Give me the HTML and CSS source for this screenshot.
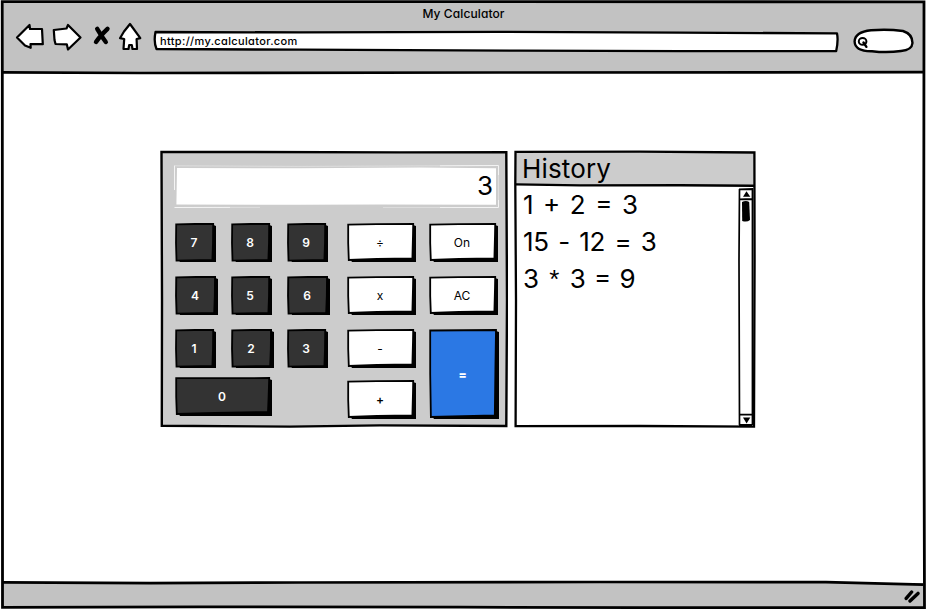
FILE: index.html
```html
<!DOCTYPE html>
<html lang="en">
<head>
<meta charset="utf-8">
<title>My Calculator</title>
<link rel="stylesheet" href="styles.css">
</head>
<body>
<svg class="defs" aria-hidden="true">
  <symbol id="key" viewBox="0 0 41 39" preserveAspectRatio="none">
    <path d="M4 4L38.5 2L41 3L41 39L5 39.2L4 37Z"/>
    <path d="M1.2 1.4L20 1L38.2 1L38 20L37.4 37L1.5 37.6L1 20Z" fill="#333" stroke="#000" stroke-width="1.8"/>
  </symbol>
  <symbol id="op" viewBox="0 0 69 39" preserveAspectRatio="none">
    <path d="M4 4L66 2L69 3L69 39L5 39.2L4 37Z"/>
    <path d="M1.2 1.6L30 1.2L66.2 1L66 12L65.4 35.4L30 36L1.8 37L1.2 20Z" fill="#fff" stroke="#000" stroke-width="1.8"/>
  </symbol>
  <symbol id="zero" viewBox="0 0 97 39" preserveAspectRatio="none">
    <path d="M4 4L94 2L97 3L97 39L5 39.2L4 37Z"/>
    <path d="M1.2 1.2L94.2 1L93.6 20L93 35L40 36L1.8 37L1.2 20Z" fill="#333" stroke="#000" stroke-width="1.8"/>
  </symbol>
  <symbol id="eq" viewBox="0 0 70 90" preserveAspectRatio="none">
    <path d="M4 4L67 2L70 3L70 90L5 90.2L4 88Z"/>
    <path d="M1.2 1.5L67 1L66.4 40L65.8 86.5L1.9 88L1.2 45Z" fill="#2b78e4" stroke="#000" stroke-width="1.8"/>
  </symbol>
</svg>
<div class="window">
  <header class="toolbar">
    <h1 class="title">My Calculator</h1>
    <div class="bar">
      <svg class="nav" width="132" height="30" viewBox="14 22 132 30">
        <g fill="#fff" stroke="#000" stroke-width="2.2" stroke-linejoin="round">
          <path d="M17 37.5L29.5 25L30 29L42 29L42.8 44.2L30.5 44L30.7 47.8L25 45.5Z"/>
          <path d="M53.8 30L66.5 28.5L68 25L80.5 37.5L68 49.5L66.8 44.3L55.5 44L54.5 40Z"/>
          <path d="M130 24L140.3 38.2L136.6 39L137 49L132.5 49L131.8 45L129.2 45L128.5 49L123.5 49L124.2 39L120 38.2L124 31.5Z"/>
        </g>
        <path d="M97.2 28.8Q102 37 105.8 42M107.5 28.8Q100 36 96 42" fill="none" stroke="#000" stroke-width="4.4" stroke-linecap="round"/>
      </svg>
      <div class="address">
        <svg class="sketch" viewBox="153 30 687 23">
          <path d="M155.5 32L300 32.4L500 31.8L680 32.6L837 33.4Q838.5 40 836.2 51L680 51.2L520 50.7L300 49.7L156.5 49Q153.5 42 155.5 32Z" fill="#fff" stroke="#000" stroke-width="2.3" stroke-linejoin="round"/>
        </svg>
        <span class="url">http://my.calculator.com</span>
      </div>
      <svg class="search" width="62" height="28" viewBox="852 27 62 28">
        <path d="M871 30.3Q887 28.8 903 31Q912.5 34 912.5 43Q912 50 901 51Q887 53 872 51.2Q855 51.5 854.6 41.5Q855 32 871 30.3Z" fill="#fff" stroke="#000" stroke-width="2.4"/>
        <ellipse cx="862.6" cy="41.4" rx="3.8" ry="3.4" fill="none" stroke="#000" stroke-width="2"/>
        <path d="M863.5 42.5L866.4 46.8" stroke="#000" stroke-width="2.4" stroke-linecap="round"/>
      </svg>
    </div>
  </header>
  <main class="page">
    <section class="calc">
      <svg class="sketch" viewBox="160 150 348 278">
        <path d="M161.5 152L225 152L400 152.4L506.3 152.2L507 300L506.3 426L380 425.4L290 426.6L161.8 425.8L162 300Z" fill="#ccc" stroke="#000" stroke-width="2.4"/>
      </svg>
      <div class="display">
        <svg class="sketch" viewBox="174 165 326 43">
          <path d="M177 168L300 168.3L420 167.6L496 168.3V204.7L380 204.5L300 204.8L176.4 204.6Z" fill="#fff"/>
          <path d="M174.5 165.5V190M174.5 207.5L230 207.4M440 207.6L498.5 207.5V200M440 165.8L498.5 165.5V175" fill="none" stroke="#f4f4f4"/>
          <path d="M175 165.8L300 166.4L440 165.8M230 207.4H260M383 207.6H440M498.5 175V200" fill="none" stroke="#dedede"/>
        </svg>
        <output class="readout">3</output>
      </div>
      <div class="pad">
        <div class="digits">
          <button class="key"><svg class="face"><use href="#key"/></svg><span>7</span></button>
          <button class="key"><svg class="face"><use href="#key"/></svg><span>8</span></button>
          <button class="key"><svg class="face"><use href="#key"/></svg><span>9</span></button>
          <button class="key broad"><svg class="face"><use href="#key"/></svg><span>4</span></button>
          <button class="key"><svg class="face"><use href="#key"/></svg><span>5</span></button>
          <button class="key broad"><svg class="face"><use href="#key"/></svg><span>6</span></button>
          <button class="key"><svg class="face"><use href="#key"/></svg><span>1</span></button>
          <button class="key broad"><svg class="face"><use href="#key"/></svg><span>2</span></button>
          <button class="key"><svg class="face"><use href="#key"/></svg><span>3</span></button>
          <button class="key zero"><svg class="face"><use href="#zero"/></svg><span>0</span></button>
        </div>
        <div class="ops">
          <button class="key op"><svg class="face"><use href="#op"/></svg><span>÷</span></button>
          <button class="key op"><svg class="face"><use href="#op"/></svg><span>x</span></button>
          <button class="key op"><svg class="face"><use href="#op"/></svg><span>-</span></button>
          <button class="key op plus"><svg class="face"><use href="#op"/></svg><span>+</span></button>
        </div>
        <div class="ops controls">
          <button class="key op"><svg class="face"><use href="#op"/></svg><span>On</span></button>
          <button class="key op"><svg class="face"><use href="#op"/></svg><span>AC</span></button>
          <button class="key equals"><svg class="face"><use href="#eq"/></svg><span>=</span></button>
        </div>
      </div>
    </section>
    <section class="history">
      <svg class="sketch" viewBox="514 150 242 278">
        <path d="M516 152H754V184.8L640 185.6L516 184.5Z" fill="#ccc"/>
        <path d="M515.5 151.8L640 151.6L754.4 152.5L754.6 260L754 426.6L640 426L515.6 426.2L516 300L515.3 184Z" fill="none" stroke="#000" stroke-width="2.3"/>
        <path d="M516 184.4L580 185.4L680 185.2L754 185.8" fill="none" stroke="#000" stroke-width="2.4"/>
      </svg>
      <h2 class="heading">History</h2>
      <div class="log">
        <ul class="entries">
          <li class="sum">1 + 2 = 3</li>
          <li class="difference">15 - 12 = 3</li>
          <li class="product">3 <span class="star">*</span> 3 = 9</li>
        </ul>
        <svg class="scroll" width="17" height="238" viewBox="738 188 17 238">
          <path d="M739.5 189L739 260L739.5 425" fill="none" stroke="#000" stroke-width="1.7"/>
          <path d="M739 189.4L752.5 189V425.3M739 199.3L752 199M739 414.6H752M739 425H752" fill="none" stroke="#000" stroke-width="1.8"/>
          <path d="M746.5 191.3L750.3 196.8H743Z"/>
          <path d="M743 417.5H750.3L746.6 423.4Z"/>
          <path d="M742 202Q746 200 749.2 202L750 220Q747 222.6 742.2 221Z"/>
        </svg>
      </div>
    </section>
  </main>
  <footer class="status">
    <svg width="18" height="16" viewBox="902 589 18 16">
      <path d="M906.2 599.4L911.6 593M910 602L918 594.4" stroke="#000" stroke-width="3.4" stroke-linecap="round"/>
    </svg>
  </footer>
  <svg class="sketch" viewBox="0 0 926 610">
    <path d="M2.5 584L2.3 72L2.2 1.7L450 1.7L924 1.8L923.7 300L924.5 607.6L640 607.6L460 607.2L200 606.8L2.5 607.3Z" fill="none" stroke="#000" stroke-width="2.8"/>
    <path d="M3 72.3L140 73L500 72.5L923 72.2" fill="none" stroke="#000" stroke-width="2.7"/>
    <path d="M3 582.3L150 583.1L300 582.5L600 582L826 582.2L923 584.6" fill="none" stroke="#000" stroke-width="2.7"/>
  </svg>
</div>
</body>
</html>
```
FILE: styles.css
```css
* { box-sizing: border-box; }

body {
  margin: 0;
  background: #fff;
  color: #000;
  font-family: Inter, Lato, "Liberation Sans", sans-serif;
  font-feature-settings: "cv11" 1;
}

.defs { position: absolute; width: 0; height: 0; }

.window {
  position: relative;
  display: flex;
  flex-direction: column;
  width: 926px;
  height: 610px;
  padding: 2px 2px 3px 3px;
  overflow: hidden;
}

/* hand-drawn outlines lie behind the content of their own box */
.sketch {
  position: absolute;
  inset: 0;
  width: 100%;
  height: 100%;
  pointer-events: none;
}

.toolbar { height: 70px; background: #c2c2c2; }

.title {
  margin: 0;
  padding-top: 4px;
  font-size: 12px;
  font-weight: 450;
  line-height: 16px;
  letter-spacing: 0.1px;
  text-align: center;
}

.bar { display: flex; align-items: flex-start; padding-left: 11px; }
.nav { flex: none; }
.address { position: relative; width: 687px; height: 23px; margin: 8px 12px 0 7px; }
.url {
  position: relative;
  display: block;
  padding-left: 7px;
  font-size: 11px;
  font-weight: 500;
  line-height: 22px;
  letter-spacing: 0.35px;
}
.search { flex: none; margin-top: 5px; }

.page { flex: 1; display: flex; gap: 6px; padding: 78px 0 0 157px; }

.calc { position: relative; width: 348px; height: 278px; padding: 15px 8px 0 14px; }
.display { position: relative; height: 43px; }
.readout {
  position: relative;
  display: block;
  padding-right: 7px;
  font-size: 26px;
  line-height: 41px;
  text-align: right;
}

.pad { display: flex; padding: 15px 0 0 1px; }
.digits {
  display: grid;
  grid-template-columns: 56px 56px 60px;
  grid-template-rows: 53px 53px 48px 39px;
  align-items: start;
}
.ops {
  display: grid;
  grid-template-rows: 53px 53px 51px 39px;
  align-items: start;
  width: 82px;
}
.controls { grid-template-rows: 53px 53px 90px; width: 70px; }

.key {
  position: relative;
  width: 41px;
  height: 39px;
  padding: 1px 3px 0 0;
  border: 0;
  background: none;
  color: #fff;
  font: 600 12px/38px Inter, Lato, sans-serif;
  text-align: center;
}
.key span { position: relative; }
.face { position: absolute; inset: 0; width: 100%; height: 100%; }
.broad { width: 43px; }
.zero { width: 97px; grid-column: 1 / 3; }
.op { width: 69px; color: #000; font-weight: 400; }
.plus { font-weight: 600; }
.equals { width: 70px; height: 90px; font-weight: 800; }

.history { position: relative; display: flex; flex-direction: column; width: 242px; height: 278px; }
.heading {
  position: relative;
  height: 36px;
  margin: 0;
  padding: 2px 0 0 8px;
  font-size: 26px;
  font-weight: 400;
  line-height: 34px;
  letter-spacing: 0.15px;
}
.log { position: relative; display: flex; justify-content: space-between; padding-right: 1px; }
.scroll { margin-top: 2px; flex: none; }
.entries {
  margin: 0;
  padding: 0 0 0 9px;
  list-style: none;
  font-size: 26px;
  line-height: 37px;
  white-space: nowrap;
}
.sum { word-spacing: 2.2px; }
.difference { letter-spacing: -0.3px; word-spacing: 2.4px; }
.product { word-spacing: 1px; }
.star {
  display: inline-block;
  width: 14px;
  font-family: "Liberation Sans", sans-serif;
  line-height: 1;
  text-align: center;
}

.status {
  display: flex;
  justify-content: flex-end;
  height: 24px;
  padding: 5px 4px 0 0;
  background: #c2c2c2;
}
```
